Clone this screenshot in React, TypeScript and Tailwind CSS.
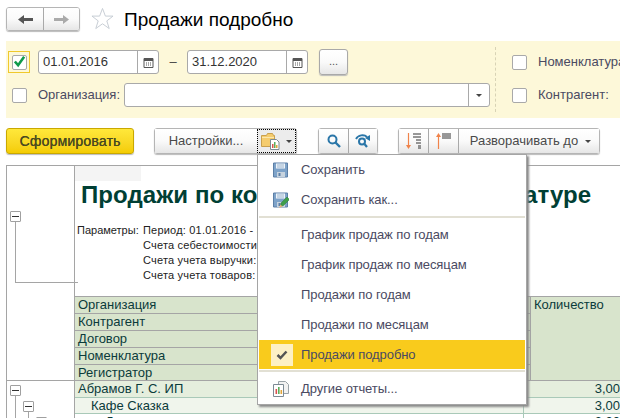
import type { ReactNode } from "react";

const BTN = "flex items-center justify-center border-[#a9a9a9] bg-gradient-to-b from-white via-[#fafafa] to-[#e6e6e6]";

function Calendar() {
  return (
    <svg width="13" height="13" viewBox="0 0 13 13">
      <path d="M2 2.500h9v9H2z" fill="#fff" stroke="#555" />
      <path d="M2 2h9v3H2z" fill="#555" />
      <path d="M4 7h1M6 7h1M8 7h1M4 9h1M6 9h1M8 9h1" stroke="#555" />
    </svg>
  );
}

function Caret() {
  return (
    <svg width="6" height="3" viewBox="0 0 6 3">
      <path d="M0 0h6L3 3z" fill="#444" />
    </svg>
  );
}

function CheckBox({ checked }: { checked?: boolean }) {
  return (
    <div className="flex h-[15px] w-[15px] items-center justify-center rounded-[2px] border border-[#a9a9a9] bg-white">
      {checked && (
        <svg width="14" height="13" viewBox="0 0 14 13" className="-mt-[1px]">
          <path d="M2 6.500l3.500 4L12 1.500" fill="none" stroke="#0f9a4a" strokeWidth="2.800" />
        </svg>
      )}
    </div>
  );
}

function DateField({ value }: { value: string }) {
  return (
    <div className="flex h-[24px] w-[121px] items-center rounded-[3px] border border-[#a9a9a9] bg-white">
      <span className="flex-1 pl-[4px] text-[13px] text-[#333]">{value}</span>
      <div className="flex h-full w-[21px] items-center justify-center border-l border-[#a9a9a9]">
        <Calendar />
      </div>
    </div>
  );
}

function FolderIcon() {
  return (
    <svg width="20" height="18" viewBox="0 0 20 18">
      <path d="M.5 3.500h5l1-2h5l1 2h1v11H.5z" fill="#f5cc6e" stroke="#c9a04e" />
      <path d="M1 5.500h12" stroke="#fbe7ad" />
      <path d="M9.500 7.500h6l2.500 2.500v7.500H9.500z" fill="#fff" stroke="#7c8a94" />
      <path d="M11 12h1.500v4H11z" fill="#d9534f" />
      <path d="M13 10h1.500v6H13z" fill="#5cae5c" />
      <path d="M15 13h1.500v3H15z" fill="#e2a63b" />
    </svg>
  );
}

function SaveIcon({ pencil }: { pencil?: boolean }) {
  return (
    <svg width="16" height="16" viewBox="0 0 16 16">
      <path d="M.5 1h14v14H.5z" fill="#7ea3c9" stroke="#5c7fa6" />
      <path d="M3 1.500h9v5H3z" fill="#eef3f8" />
      <path d="M4 3h7M4 5h7" stroke="#9db6cf" />
      <path d="M4 10h8v5H4z" fill="#c7d3de" />
      <path d="M5.500 11h2v3h-2z" fill="#5c7fa6" />
      {pencil && (
        <>
          <path d="M8 11l6-6 2.500 2.500-6 6-3 1z" fill="#3f9f4a" stroke="#2e7a38" strokeWidth=".5" />
          <path d="M6 16l1.500-3.500 2 2z" fill="#e8b27a" />
        </>
      )}
    </svg>
  );
}

function ReportsIcon() {
  return (
    <svg width="16" height="16" viewBox="0 0 16 16">
      <path d="M5.500.5h7l3 3v9h-10z" fill="#f2f2f2" stroke="#9aa3a8" />
      <path d="M.5 3.500h10v12H.5z" fill="#fff" stroke="#7c8a94" />
      <path d="M2.500 8h1.600v5H2.500z" fill="#d9534f" />
      <path d="M5 6h1.600v7H5z" fill="#5cae5c" />
      <path d="M7.500 9h1.600v4H7.500z" fill="#e2a63b" />
    </svg>
  );
}

function Minus() {
  return (
    <div className="flex h-[11px] w-[11px] shrink-0 items-center justify-center rounded-[1px] border border-[#a0a0a0] bg-white">
      <div className="h-[1px] w-[7px] bg-[#333]" />
    </div>
  );
}

function HeaderRow({ children }: { children: ReactNode }) {
  return <div className="h-[17px] border-b border-[#a5a5a5] pl-[3px] text-[13px] leading-[16px] text-[#0b3b3b]">{children}</div>;
}

function MenuItem({ icon, children }: { icon?: ReactNode; children: ReactNode }) {
  return (
    <div className="flex h-[30px] items-center">
      <div className="flex w-[43px] justify-center pl-[2px]">{icon}</div>
      <span className="text-[13px] tracking-[-0.08px] text-[#4a4a62]">{children}</span>
    </div>
  );
}

export default function App() {
  return (
    <div className="relative h-[418px] w-[620px] overflow-hidden bg-white font-['Liberation_Sans',Arial,sans-serif]">
      <div className="flex h-[41px] items-start pl-[6px] pt-[7px]">
        <div className="flex h-[24px] w-[74px] overflow-hidden rounded-[3px] border border-[#b5b5b5] shadow-[0_1px_1px_#bbb]">
          <div className={`${BTN} w-[37px] border-r`}>
            <svg width="15" height="11" viewBox="0 0 15 11">
              <path d="M0 5.500L6 1v3h9v3H6v3z" fill="#555" />
            </svg>
          </div>
          <div className={`${BTN} flex-1`}>
            <svg width="15" height="11" viewBox="0 0 15 11">
              <path d="M15 5.500L9 1v3H0v3h9v3z" fill="#aaa" />
            </svg>
          </div>
        </div>
        <svg width="23" height="23" viewBox="0 0 24 23" className="ml-[11px]">
          <path d="M12 1l3 8h8l-6.500 5 2.500 8-7-5-7 5 2.500-8L1 9h8z" fill="#fff" stroke="#c5ccd3" />
        </svg>
        <h1 className="ml-[10px] text-[19px] font-normal leading-[26px] text-black">Продажи подробно</h1>
      </div>

      <div className="ml-[6px] flex h-[77px] items-stretch bg-[#fdf8d9]">
        <div className="flex w-[484px] shrink-0 flex-col">
          <div className="flex h-[42px] items-center pl-[2px]">
            <div className="flex h-[22px] w-[22px] items-center justify-center border border-[#f0c92c]">
              <CheckBox checked />
            </div>
            <div className="ml-[8px]">
              <DateField value="01.01.2016" />
            </div>
            <span className="w-[28px] text-center text-[13px] text-[#444]">–</span>
            <DateField value="31.12.2020" />
            <div className={`${BTN} ml-[11px] h-[26px] w-[29px] rounded-[3px] border pb-[2px] text-[11px] text-[#555] shadow-[0_1px_1px_#bbb]`}>...</div>
          </div>
          <div className="flex h-[24px] items-center pl-[6px]">
            <CheckBox />
            <span className="ml-[11px] w-[86px] text-[13px] text-[#4a4a62]">Организация:</span>
            <div className="flex h-[24px] flex-1 items-center rounded-[3px] border border-[#a9a9a9] bg-white">
              <div className="flex-1" />
              <div className="flex h-full w-[21px] items-center justify-center border-l border-[#a9a9a9]">
                <Caret />
              </div>
            </div>
          </div>
        </div>
        <div className="my-[6px] ml-[5px] border-l border-dashed border-[#d8d3b5]" />
        <div className="flex flex-col pl-[16px]">
          <div className="flex h-[42px] items-center whitespace-nowrap">
            <CheckBox />
            <span className="ml-[11px] text-[13px] text-[#4a4a62]">Номенклатура:</span>
          </div>
          <div className="flex h-[24px] items-center whitespace-nowrap">
            <CheckBox />
            <span className="ml-[11px] text-[13px] text-[#4a4a62]">Контрагент:</span>
          </div>
        </div>
      </div>

      <div className="ml-[6px] mt-[10px] flex h-[26px] items-start">
        <div className="flex h-[26px] w-[128px] items-center justify-center rounded-[3px] border border-[#c9a800] bg-gradient-to-b from-[#ffe83a] to-[#f4cc00] text-[14px] tracking-[0.2px] text-[#4a4a20] shadow-[0_1px_1px_#bbb] [text-shadow:0.3px_0_0_#4a4a20]">
          Сформировать
        </div>
        <div className="ml-[20px] flex h-[26px] w-[143px] rounded-[3px] border border-[#b5b5b5] shadow-[0_1px_1px_#bbb]">
          <div className={`${BTN} w-[102px] text-[13px] text-[#4a4a4a]`}>Настройки...</div>
          <div className="flex flex-1 items-center gap-[5px] border border-dotted border-black bg-[#ececec] pl-[3px]">
            <FolderIcon />
            <Caret />
          </div>
        </div>
        <div className="ml-[21px] flex h-[26px] w-[60px] rounded-[3px] border border-[#b5b5b5] shadow-[0_1px_1px_#bbb]">
          <div className={`${BTN} w-[30px] border-r`}>
            <svg width="14" height="14" viewBox="0 0 14 14">
              <circle cx="5.500" cy="5.500" r="4" fill="none" stroke="#2a76a8" strokeWidth="2" />
              <path d="M8.500 8.500L13 13" stroke="#2a76a8" strokeWidth="2.400" />
            </svg>
          </div>
          <div className={`${BTN} flex-1`}>
            <svg width="16" height="15" viewBox="0 0 16 15">
              <circle cx="7" cy="7.500" r="3" fill="none" stroke="#2a76a8" strokeWidth="2" />
              <path d="M9.500 10L12 13" stroke="#2a76a8" strokeWidth="2.200" />
              <path d="M1 5C3 1 9 0 12 3" fill="none" stroke="#2a76a8" strokeWidth="1.800" />
              <path d="M15 1v6l-5-3z" fill="#2a76a8" />
            </svg>
          </div>
        </div>
        <div className="ml-[20px] flex h-[26px] w-[202px] rounded-[3px] border border-[#b5b5b5] shadow-[0_1px_1px_#bbb]">
          <div className={`${BTN} w-[30px] border-r`}>
            <svg width="16" height="18" viewBox="0 0 16 18">
              <path d="M2.500 1v14" stroke="#f0834a" strokeWidth="1.200" />
              <path d="M0 13h5l-2.500 4z" fill="#f0834a" />
              <path d="M7 2h8M7 5h8M10 8h5M10 11h5M12 14h3M12 16h3" stroke="#333" />
            </svg>
          </div>
          <div className={`${BTN} w-[30px] border-r`}>
            <svg width="16" height="18" viewBox="0 0 16 18">
              <path d="M2.500 3v14" stroke="#f0834a" strokeWidth="1.200" />
              <path d="M0 5h5L2.500 1z" fill="#f0834a" />
              <path d="M6 2h9M6 4h9M6 6h9" stroke="#333" />
            </svg>
          </div>
          <div className={`${BTN} flex-1 gap-[7px] pl-[3px] text-[13px] text-[#4a4a4a]`}>
            Разворачивать до
            <Caret />
          </div>
        </div>
      </div>

      <div className="ml-[6px] mt-[11px] flex h-[253px] border-t border-[#a5a5a5]">
        <div className="w-[69px] shrink-0 border-x border-[#a5a5a5]">
          <div className="flex h-[215px] flex-col border-b border-[#a5a5a5] pl-[3px] pt-[45px]">
            <Minus />
            <div className="ml-[5px] h-[61px] w-[63px] border-b border-l border-[#a5a5a5]" />
          </div>
          <div className="flex flex-col pl-[3px] pt-[4px]">
            <Minus />
            <div className="ml-[5px] flex flex-col border-l border-[#a5a5a5] pl-[7px] pt-[5px]">
              <Minus />
              <div className="ml-[5px] flex flex-col border-l border-[#a5a5a5] pl-[7px] pt-[5px]">
                <Minus />
              </div>
            </div>
          </div>
        </div>

        <div className="flex min-w-0 flex-1 flex-col">
          <div className="h-[130px] shrink-0 whitespace-nowrap">
            <div className="h-[15px] w-[66px] bg-[#f4f4f4]" />
            <h2 className="ml-[6px] mt-[1px] text-[24px] font-bold leading-[26px] tracking-[0.08px] text-[#003f34]">
              Продажи по контрагентам и номенклатуре
            </h2>
            <div className="mt-[15px] flex text-[11px] leading-[15px] text-[#222]">
              <span className="ml-[2px] w-[66px] shrink-0">Параметры:</span>
              <div className="tracking-[0.2px]">
                <div>Период: 01.01.2016 - 31.12.2020</div>
                <div>Счета себестоимости</div>
                <div>Счета учета выручки:</div>
                <div>Счета учета товаров:</div>
              </div>
            </div>
          </div>
          <div className="flex h-[85px] shrink-0 border-y border-[#a5a5a5] bg-[#d8e4cc]">
            <div className="w-[456px] border-r border-[#a5a5a5]">
              <HeaderRow>Организация</HeaderRow>
              <HeaderRow>Контрагент</HeaderRow>
              <HeaderRow>Договор</HeaderRow>
              <HeaderRow>Номенклатура</HeaderRow>
              <div className="pl-[3px] text-[13px] leading-[16px] text-[#0b3b3b]">Регистратор</div>
            </div>
            <div className="pl-[3px] text-[13px] leading-[16px] text-[#0b3b3b]">Количество</div>
          </div>
          <div className="flex h-[17px] border-b border-[#a9c9b8] bg-[#e5eedd] text-[13px] leading-[16px] text-[#0b3b3b]">
            <div className="w-[456px] border-r border-[#a9c9b8] pl-[3px]">Абрамов Г. С. ИП</div>
            <div className="flex-1 whitespace-nowrap pl-[70px]">3,00</div>
          </div>
          <div className="flex h-[16px] border-b border-[#a9c9b8] bg-[#f0f5ec] text-[13px] leading-[15px] text-[#0b3b3b]">
            <div className="w-[456px] border-r border-[#a9c9b8] pl-[16px]">Кафе Сказка</div>
            <div className="flex-1 whitespace-nowrap pl-[71px]">3,00</div>
          </div>
          <div className="flex flex-1 text-[13px] leading-[15px] text-[#0b3b3b]">
            <div className="w-[456px] border-r border-[#a9c9b8] pl-[30px]">Договор</div>
            <div className="flex-1 whitespace-nowrap pl-[71px]">3,00</div>
          </div>
        </div>
      </div>

      <div className="absolute left-[257px] top-[154px] h-[251px] w-[270px] border border-[#a5a5a5] bg-white shadow-[2px_2px_2px_#8a8a8a]">
        <MenuItem icon={<SaveIcon />}>Сохранить</MenuItem>
        <MenuItem icon={<SaveIcon pencil />}>Сохранить как...</MenuItem>
        <div className="mx-[1px] mb-[2px] mt-[1px] h-[2px] bg-[#e2e0d4]" />
        <MenuItem>График продаж по годам</MenuItem>
        <MenuItem>График продаж по месяцам</MenuItem>
        <MenuItem>Продажи по годам</MenuItem>
        <MenuItem>Продажи по месяцам</MenuItem>
        <div className="mx-[1px] flex h-[29px] items-center bg-[#f9cb1c]">
          <div className="ml-[12px] flex h-[22px] w-[22px] items-center justify-center bg-[#fdf0c4]">
            <svg width="12" height="10" viewBox="0 0 12 10">
              <path d="M1.500 5l3 3L10.500 1.500" fill="none" stroke="#555" strokeWidth="2.500" />
            </svg>
          </div>
          <span className="ml-[8px] text-[13px] tracking-[-0.08px] text-[#4a4a62]">Продажи подробно</span>
        </div>
        <div className="mx-[1px] mb-[2px] mt-[1px] h-[2px] bg-[#e2e0d4]" />
        <MenuItem icon={<ReportsIcon />}>Другие отчеты...</MenuItem>
      </div>
    </div>
  );
}
